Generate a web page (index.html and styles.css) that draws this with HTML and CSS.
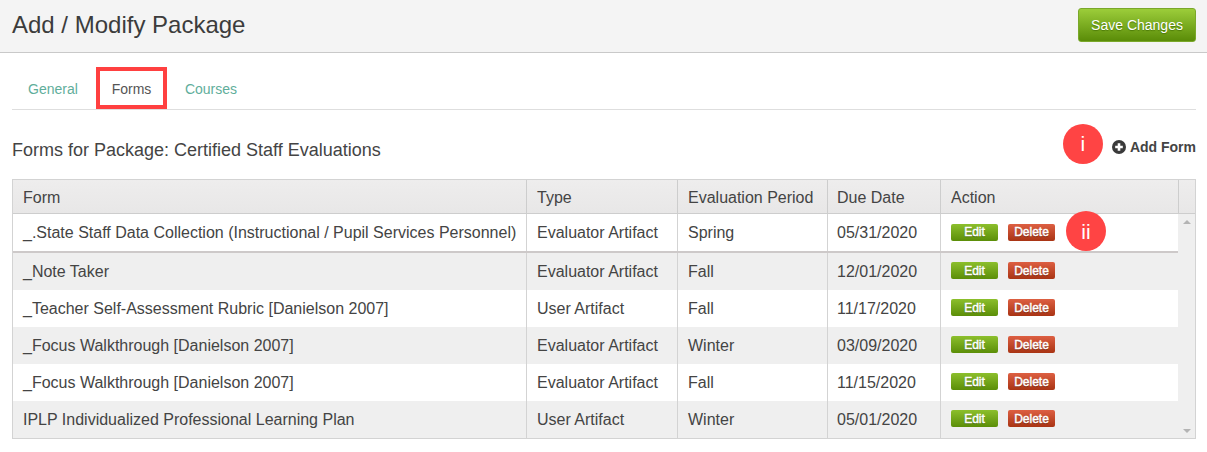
FILE: index.html
```html
<!DOCTYPE html>
<html lang="en">
<head>
<meta charset="utf-8">
<title>Add / Modify Package</title>
<link rel="stylesheet" href="styles.css">
</head>
<body>
<header class="top">
  <h1>Add / Modify Package</h1>
  <button class="save">Save Changes</button>
</header>
<main class="content">
  <nav class="tabs">
    <a class="tab">General</a>
    <a class="tab current">Forms</a>
    <a class="tab">Courses</a>
  </nav>
  <div class="subhead">
    <h2>Forms for Package: Certified Staff Evaluations</h2>
    <div class="add-wrap">
      <span class="callout">i</span>
      <a class="add">
        <svg class="plus" viewBox="0 0 14 14" width="14" height="14"><circle cx="7" cy="7" r="7" fill="#3a3a3a"/><path d="M3.2 5.7h2.5V3.2h2.6v2.5h2.5v2.6H8.3v2.5H5.7V8.3H3.2z" fill="#fff"/></svg>
        Add Form
      </a>
    </div>
  </div>
  <div class="grid">
    <div class="grid-head">
      <div class="th c1">Form</div>
      <div class="th c2">Type</div>
      <div class="th c3">Evaluation Period</div>
      <div class="th c4">Due Date</div>
      <div class="th c5">Action</div>
      <div class="th c6"></div>
    </div>
    <div class="grid-body">
      <div class="rows">
        <div class="row first">
          <div class="td c1">_.State Staff Data Collection (Instructional / Pupil Services Personnel)</div>
          <div class="td c2">Evaluator Artifact</div><div class="td c3">Spring</div><div class="td c4">05/31/2020</div>
          <div class="td c5"><span class="btn edit">Edit</span><span class="btn del">Delete</span><span class="callout second">ii</span></div>
        </div>
        <div class="row alt">
          <div class="td c1">_Note Taker</div>
          <div class="td c2">Evaluator Artifact</div><div class="td c3">Fall</div><div class="td c4">12/01/2020</div>
          <div class="td c5"><span class="btn edit">Edit</span><span class="btn del">Delete</span></div>
        </div>
        <div class="row">
          <div class="td c1">_Teacher Self-Assessment Rubric [Danielson 2007]</div>
          <div class="td c2">User Artifact</div><div class="td c3">Fall</div><div class="td c4">11/17/2020</div>
          <div class="td c5"><span class="btn edit">Edit</span><span class="btn del">Delete</span></div>
        </div>
        <div class="row alt">
          <div class="td c1">_Focus Walkthrough [Danielson 2007]</div>
          <div class="td c2">Evaluator Artifact</div><div class="td c3">Winter</div><div class="td c4">03/09/2020</div>
          <div class="td c5"><span class="btn edit">Edit</span><span class="btn del">Delete</span></div>
        </div>
        <div class="row">
          <div class="td c1">_Focus Walkthrough [Danielson 2007]</div>
          <div class="td c2">Evaluator Artifact</div><div class="td c3">Fall</div><div class="td c4">11/15/2020</div>
          <div class="td c5"><span class="btn edit">Edit</span><span class="btn del">Delete</span></div>
        </div>
        <div class="row alt">
          <div class="td c1">IPLP Individualized Professional Learning Plan</div>
          <div class="td c2">User Artifact</div><div class="td c3">Winter</div><div class="td c4">05/01/2020</div>
          <div class="td c5"><span class="btn edit">Edit</span><span class="btn del">Delete</span></div>
        </div>
      </div>
      <div class="scroll">
        <span class="arrow up"></span>
        <span class="arrow down"></span>
      </div>
    </div>
  </div>
</main>
</body>
</html>
```
FILE: styles.css
```css
* { box-sizing: border-box; }
html, body { margin: 0; padding: 0; }
body {
  width: 1207px;
  height: 452px;
  overflow: hidden;
  background: #fff;
  font-family: "Liberation Sans", Arial, sans-serif;
  color: #3a3a3a;
}
.top {
  height: 53px;
  background: #f4f4f4;
  border-bottom: 1px solid #c9c9c9;
  display: flex;
  align-items: center;
  justify-content: space-between;
  padding: 0 11px 4px 12px;
}
.top h1 {
  margin: 2px 0 0;
  font-size: 24px;
  font-weight: 400;
  color: #3c3c3c;
}
.save {
  width: 118px;
  height: 34px;
  margin-top: 2px;
  border: 1px solid #7aa82a;
  border-radius: 3px;
  background: linear-gradient(#9ccd3a, #5a8c08);
  color: #fff;
  font: 400 14px "Liberation Sans", Arial, sans-serif;
  text-shadow: 0 1px 1px #4c7a08;
  padding: 0;
}
.content { padding: 0 11px 0 12px; }
.tabs {
  display: flex;
  height: 57px;
  padding-top: 14px;
  border-bottom: 1px solid #dedede;
}
.tab {
  height: 42px;
  display: flex;
  align-items: center;
  justify-content: center;
  padding-top: 2px;
  font-size: 14px;
  color: #5fae9b;
}
.tab:nth-child(1) { width: 82px; }
.tab:nth-child(3) { width: 88px; }
.tab.current {
  width: 71px;
  margin-left: 2px;
  color: #555;
  border: 4px solid #ff4040;
  background: #fff;
}
.subhead {
  height: 69px;
  display: flex;
  align-items: center;
  justify-content: space-between;
}
.subhead h2 {
  margin: 12px 0 0;
  font-size: 18px;
  font-weight: 400;
  color: #444;
}
.add-wrap { display: flex; align-items: center; margin-bottom: 1px; }
.add {
  display: flex;
  align-items: center;
  gap: 4px;
  margin: 5px 0 0 9px;
  font-size: 14px;
  font-weight: 700;
  color: #444;
}
.plus { display: block; }
.callout {
  width: 40px;
  height: 40px;
  border-radius: 50%;
  background: #ff4444;
  color: #fff;
  font-size: 21px;
  display: flex;
  align-items: center;
  justify-content: center;
}
.callout.second { position: absolute; left: 125px; top: -3px; }
.grid { border: 1px solid #d3d3d3; width: 1184px; height: 260px; background: #efefef; }
.grid-head {
  display: flex;
  height: 34px;
  background: linear-gradient(#eeeded, #e8e7e7);
  border-bottom: 1px solid #cdcdcd;
}
.th {
  font-size: 16px;
  line-height: 35px;
  color: #444;
  padding-left: 10px;
  border-right: 1px solid #cdcdcd;
}
.c1 { width: 514px; }
.c2 { width: 151px; }
.c3 { width: 150px; }
.c4 { width: 113px; }
.c5 { width: 237px; }
.th.c4, .td.c4 { padding-left: 9px; }
.th.c5 { width: 238px; }
.th.c6 { flex: 1; border-right: 0; padding: 0; }
.grid-body { display: flex; }
.rows { width: 1165px; }
.row { display: flex; height: 37px; background: #fff; }
.row.alt { background: #efefef; }
.row.first { height: 39px; border-bottom: 2px solid #cdc9c9; }
.td {
  font-size: 16px;
  line-height: 38px;
  padding-left: 10px;
  color: #444;
  white-space: nowrap;
  border-right: 1px solid #d3d3d3;
}
.td.c5 {
  position: relative;
  border-right: 0;
  display: flex;
  align-items: center;
  gap: 10px;
  padding-bottom: 2px;
}
.row.first .td { line-height: 37px; }
.row.first .td.c5 { padding-bottom: 0; }
.btn {
  height: 17px;
  display: flex;
  align-items: center;
  justify-content: center;
  border-radius: 2px;
  color: #fff;
  font-size: 12px;
  font-weight: 400;
  -webkit-text-stroke: 0.45px #fff;
  text-shadow: 0 1px 1px rgba(0,0,0,.4);
}
.edit { width: 47px; background: linear-gradient(#8cbf2c, #5b8e08); }
.del { width: 47px; background: linear-gradient(#dd5f42, #a93414); }
.scroll {
  flex: 1;
  display: flex;
  flex-direction: column;
  justify-content: space-between;
  align-items: center;
  padding: 6px 0 5px;
  height: 224px;
}
.arrow { width: 0; height: 0; border-left: 4px solid transparent; border-right: 4px solid transparent; }
.up { border-bottom: 4px solid #b4b4b4; }
.down { border-top: 4px solid #b4b4b4; }
```
